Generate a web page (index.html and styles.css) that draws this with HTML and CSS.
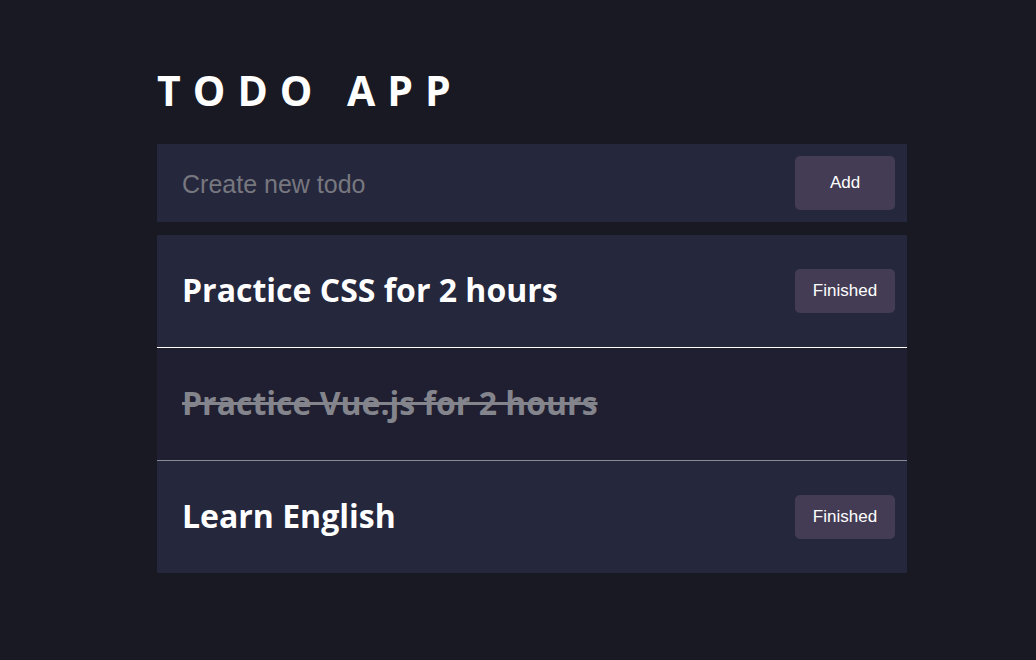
FILE: index.html
```html
<!DOCTYPE html>
<html lang="en">
<head>
<meta charset="utf-8">
<title>Todo App</title>
<link rel="stylesheet" href="styles.css">
</head>
<body>
<main class="app">
  <h1 class="title">TODO APP</h1>
  <form class="new-todo">
    <input class="new-todo__input" type="text" placeholder="Create new todo">
    <button class="btn btn--add" type="button">Add</button>
  </form>
  <ul class="todo-list">
    <li class="todo">
      <span class="todo__text">Practice CSS for 2 hours</span>
      <button class="btn btn--finish" type="button">Finished</button>
    </li>
    <li class="todo todo--done">
      <span class="todo__text">Practice Vue.js for 2 hours</span>
    </li>
    <li class="todo">
      <span class="todo__text">Learn English</span>
      <button class="btn btn--finish" type="button">Finished</button>
    </li>
  </ul>
</main>
</body>
</html>
```

FILE: styles.css
```css
* { box-sizing: border-box; }
html, body {
  margin: 0;
  padding: 0;
  background: #191923;
  height: 100%;
}
body {
  font-family: "Liberation Sans", Arial, sans-serif;
  color: #fff;
}
.app {
  width: 750px;
  margin-left: 157px;
  padding-top: 70px;
}
.title {
  margin: 0 0 34px;
  font-family: "Open Sans", "Noto Sans", sans-serif;
  font-weight: 700;
  font-size: 41px;
  line-height: 40px;
  letter-spacing: 12px;
  color: #fff;
}
.new-todo {
  display: flex;
  align-items: center;
  justify-content: space-between;
  height: 78px;
  padding: 0 12px 0 25px;
  background: #25273d;
  margin-bottom: 13px;
}
.new-todo__input {
  flex: 1;
  background: transparent;
  border: 0;
  outline: 0;
  color: #fff;
  font-family: "Liberation Sans", Arial, sans-serif;
  font-size: 25px;
  padding: 0;
  margin-top: 3px;
}
.new-todo__input::placeholder { color: #77777f; }
.btn {
  width: 100px;
  border: 0;
  border-radius: 5px;
  background: #433c54;
  color: #fff;
  font-family: "Liberation Sans", Arial, sans-serif;
  font-size: 17px;
  padding: 0;
}
.btn--add { height: 54px; }
.btn--finish { height: 44px; }
.todo-list {
  list-style: none;
  margin: 0;
  padding: 0;
}
.todo {
  display: flex;
  align-items: center;
  justify-content: space-between;
  height: 113px;
  padding: 0 12px 0 25px;
  background: #25273d;
  border-bottom: 1px solid #ffffff;
}
.todo:last-child { border-bottom: 0; height: 112px; }
.todo--done {
  background: #1f1f31;
  border-bottom-color: #8a8a94;
}
.todo__text {
  font-family: "Open Sans", "Noto Sans", sans-serif;
  font-weight: 700;
  font-size: 32px;
  line-height: 40px;
  margin-top: -2px;
  color: #fff;
}
.todo--done .todo__text {
  color: #84848c;
  text-decoration: line-through;
  text-decoration-thickness: 3px;
}
```
